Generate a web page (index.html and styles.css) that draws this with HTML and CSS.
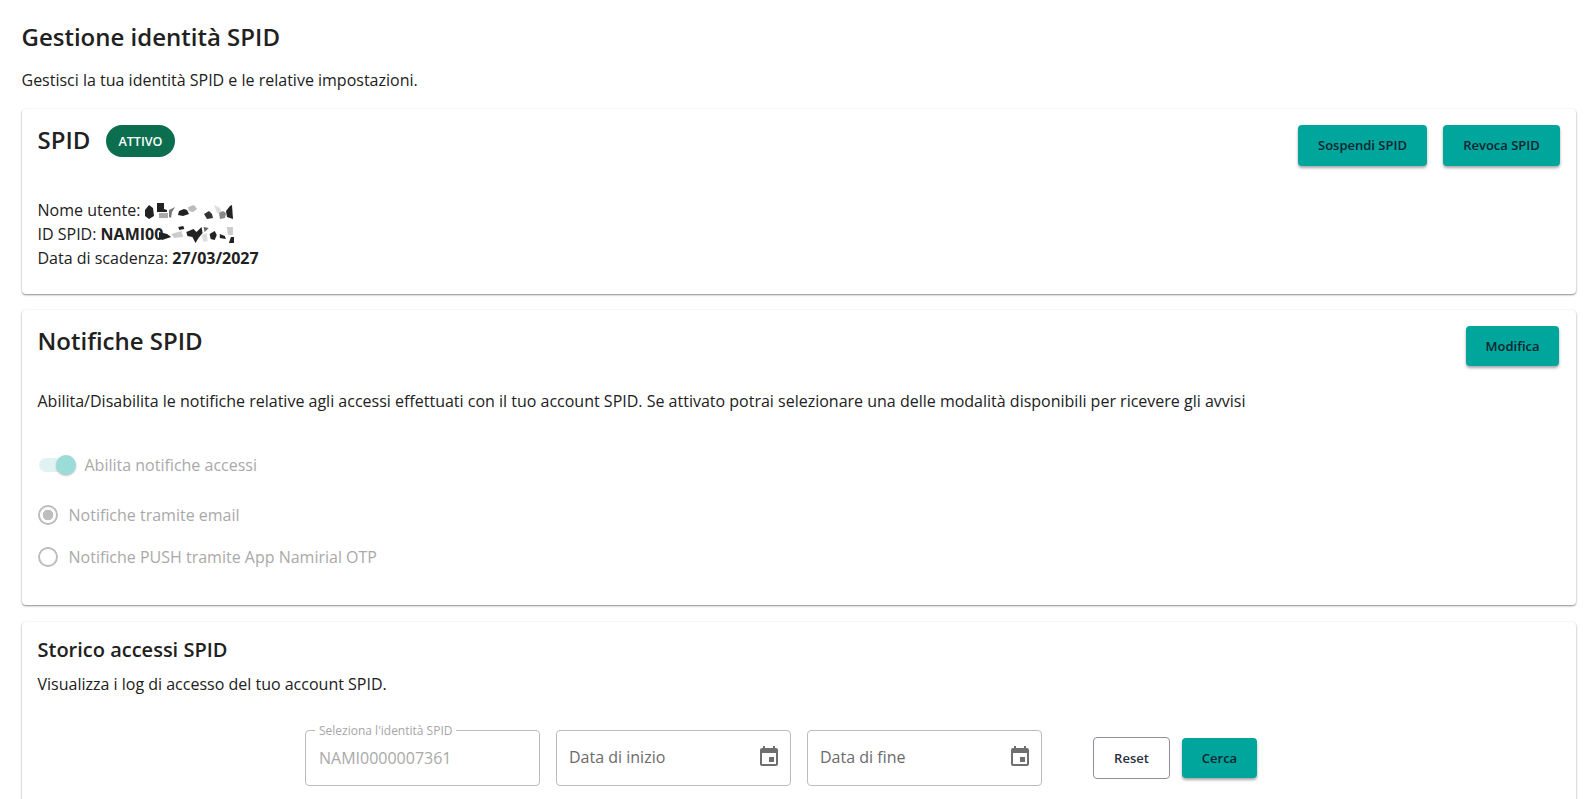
FILE: index.html
```html
<!DOCTYPE html>
<html lang="it">
<head>
<meta charset="utf-8">
<title>Gestione identità SPID</title>
<link rel="stylesheet" href="styles.css">
</head>
<body>
<main class="page">
  <h1 class="page-title">Gestione identità SPID</h1>
  <p class="page-sub">Gestisci la tua identità SPID e le relative impostazioni.</p>

  <section class="card card-spid">
    <div class="card-head">
      <div class="title-group">
        <h2 class="title-lg">SPID</h2>
        <span class="badge">ATTIVO</span>
      </div>
      <div class="actions">
        <button class="btn btn-sospendi">Sospendi SPID</button>
        <button class="btn btn-revoca">Revoca SPID</button>
      </div>
    </div>
    <div class="details">
      <div class="detail">Nome utente: <svg class="blur blur-name" viewBox="0 0 92 18" preserveAspectRatio="none" aria-hidden="true">
        <path fill="#222" d="M1 8l4-5 4 3 1 8-5 3-4-3z"/>
        <path fill="#222" d="M13 1h7v6l3 1v2h-10z"/>
        <path fill="#aaa" d="M15 11h9v5h-9z"/>
        <path fill="#777" d="M25 8l6-3-3 5-1 6-2-1z"/>
        <path fill="#222" d="M35 9l5-2 3 1 2 4-6 2-5-1z"/>
        <path fill="#bbb" d="M44 5l6-2 3 4-4 3-4-1z"/>
        <path fill="#333" d="M60 12l5-3 3 3 1 4-6 1z"/>
        <path fill="#ddd" d="M70 3l6 3 2 6-5-1z"/>
        <path fill="#888" d="M75 11l4-2 3 2-1 5-5 1z"/>
        <path fill="#222" d="M82 9l4-5 2-1 1 14-6-2z"/>
      </svg></div>
      <div class="detail">ID SPID: <b>NAMI00</b><svg class="blur blur-id" viewBox="0 0 76 18" preserveAspectRatio="none" aria-hidden="true">
        <path fill="#222" d="M0 6l8 2 4 3-9 3-3-2z"/>
        <path fill="#ccc" d="M12 8l10-3 2 6-9 1z"/>
        <path fill="#222" d="M19 1l5-1 1 3-5 1z"/>
        <path fill="#222" d="M27 6l7-3 3 3 5-5 1 6-4 5-3 5-3-6-5-1z"/>
        <path fill="#666" d="M44 1l5 1-4 4z"/>
        <path fill="#ddd" d="M42 9l5-2 1 8-4 1z"/>
        <path fill="#222" d="M50 8l5-3 2 4-2 5-4-1z"/>
        <path fill="#222" d="M60 8l5 2 1 3-6-1z"/>
        <path fill="#ccc" d="M67 1h6v8h-5z"/>
        <path fill="#222" d="M71 11h3v6h-5z"/>
      </svg></div>
      <div class="detail">Data di scadenza: <b>27/03/2027</b></div>
    </div>
  </section>

  <section class="card card-notif">
    <div class="card-head">
      <h2 class="title-lg">Notifiche SPID</h2>
      <button class="btn btn-modifica">Modifica</button>
    </div>
    <p class="notif-desc">Abilita/Disabilita le notifiche relative agli accessi effettuati con il tuo account SPID. Se attivato potrai selezionare una delle modalità disponibili per ricevere gli avvisi</p>
    <div class="switch-row">
      <span class="switch"><span class="switch-track"></span><span class="switch-thumb"></span></span>
      <span class="muted">Abilita notifiche accessi</span>
    </div>
    <div class="radio-row radio-first">
      <span class="radio radio-on"></span>
      <span class="muted">Notifiche tramite email</span>
    </div>
    <div class="radio-row radio-second">
      <span class="radio"></span>
      <span class="muted">Notifiche PUSH tramite App Namirial OTP</span>
    </div>
  </section>

  <section class="card card-log">
    <h3 class="title-md">Storico accessi SPID</h3>
    <p class="log-desc">Visualizza i log di accesso del tuo account SPID.</p>
    <div class="filters">
      <div class="field field-legend">
        <span class="legend">Seleziona l'identità SPID</span>
        <span class="value-off">NAMI0000007361</span>
      </div>
      <div class="field">
        <span class="placeholder">Data di inizio</span>
        <svg class="cal" viewBox="0 0 24 24" aria-hidden="true"><path d="M17 12h-5v5h5v-5zM16 1v2H8V1H6v2H5c-1.11 0-1.99.9-1.99 2L3 19c0 1.1.89 2 2 2h14c1.1 0 2-.9 2-2V5c0-1.1-.9-2-2-2h-1V1h-2zm3 18H5V8h14v11z"/></svg>
      </div>
      <div class="field">
        <span class="placeholder">Data di fine</span>
        <svg class="cal" viewBox="0 0 24 24" aria-hidden="true"><path d="M17 12h-5v5h5v-5zM16 1v2H8V1H6v2H5c-1.11 0-1.99.9-1.99 2L3 19c0 1.1.89 2 2 2h14c1.1 0 2-.9 2-2V5c0-1.1-.9-2-2-2h-1V1h-2zm3 18H5V8h14v11z"/></svg>
      </div>
      <button class="btn-outline">Reset</button>
      <button class="btn btn-cerca">Cerca</button>
    </div>
  </section>
</main>
</body>
</html>
```
FILE: styles.css
```css
* { box-sizing: border-box; }
html, body { margin: 0; height: 799px; overflow: hidden; background: #fff; }
body { font-family: "Open Sans", "Noto Sans", sans-serif; color: #212121; font-size: 16px; }
.page { height: 799px; overflow: hidden; padding: 21px 10px 0 22px; }
.page-title { margin: 0 0 0 -.5px; font-size: 24px; line-height: 32px; font-weight: 600; }
.page-sub { margin: 15px 0 0 -.5px; font-size: 16px; line-height: 24px; }

.card {
  background: #fff;
  border-radius: 4px;
  padding: 16px 16px 16px 15.5px;
  margin-top: 16px;
  box-shadow: 0 1px 2px rgba(0,0,0,.45), 0 0 3px rgba(0,0,0,.04);
}
.card-spid { height: 185px; margin-top: 17px; }
.card-notif { height: 295px; padding-top: 15px; }
.card-log { height: 240px; margin-top: 17px; padding-top: 14px; }

.card-head { display: flex; justify-content: space-between; align-items: flex-start; }
.title-group { display: flex; align-items: center; gap: 16px; }
.title-lg { margin: 0; font-size: 24px; line-height: 32px; font-weight: 600; }
.title-group .title-lg { margin-top: -2px; }
.title-md { margin: 0; font-size: 20px; line-height: 28px; font-weight: 600; }

.badge {
  background: #0b6e4f;
  color: #fff;
  height: 32px;
  padding: 0 12px;
  border-radius: 16px;
  display: inline-flex;
  align-items: center;
  font-size: 12.6px;
  font-weight: 600;
}
.actions { display: flex; gap: 16px; }
.btn {
  border: 0;
  background: #00a69c;
  color: #0f2430;
  font: 600 13px/1 "Open Sans", "Noto Sans", sans-serif;
  border-radius: 4px;
  height: 41px;
  box-shadow: 0 2px 3px rgba(0,0,0,.35);
  padding: 0;
}
.btn-sospendi { width: 129px; }
.btn-revoca { width: 117px; }
.btn-modifica { width: 93px; height: 40px; margin-top: 1px; margin-right: 1px; }

.details { margin-top: 32px; }
.detail { font-size: 16px; line-height: 24px; height: 24px; white-space: nowrap; }
.detail b { font-weight: 700; }
.blur { display: inline-block; vertical-align: -4px; height: 18px; }
.blur-name { width: 92px; }
.blur-id { width: 77px; margin-left: -4px; }

.notif-desc { margin: 23px 0 0; font-size: 16px; line-height: 24px; }
.muted { color: #a9a9a9; font-size: 16px; line-height: 24px; }
.switch-row { display: flex; align-items: center; gap: 8px; margin-top: 40px; height: 24px; }
.switch { position: relative; width: 39px; height: 24px; flex: none; }
.switch-track { position: absolute; left: 1px; top: 5px; width: 36px; height: 14px; border-radius: 7px; background: #e0f3f2; }
.switch-thumb { position: absolute; left: 18px; top: 2px; width: 20px; height: 20px; border-radius: 50%; background: #9cdcd8; box-shadow: 0 1px 2px rgba(0,0,0,.25); }
.radio-row { display: flex; align-items: center; gap: 11px; height: 24px; }
.radio-first { margin-top: 26px; }
.radio-second { margin-top: 18px; }
.radio { width: 20px; height: 20px; border-radius: 50%; border: 2px solid #bdbdbd; flex: none; background: #fff; }
.radio-on { background: radial-gradient(circle, #bdbdbd 0 5px, #fff 5.6px); }

.log-desc { margin: 8px 0 0; font-size: 16px; line-height: 24px; }
.filters { display: flex; align-items: flex-start; gap: 16px; margin-top: 34px; padding-left: 267.5px; }
.field {
  position: relative;
  flex: none;
  width: 235px;
  height: 56px;
  border: 1px solid #bdbdbd;
  border-radius: 4px;
  padding: 0 12px;
  display: flex;
  align-items: center;
  justify-content: space-between;
}
.field-legend { padding-left: 13px; }
.legend {
  position: absolute;
  left: 9px;
  top: -8px;
  padding: 0 4px;
  background: #fff;
  font-size: 12px;
  line-height: 16px;
  color: #a6a6a6;
  white-space: nowrap;
}
.value-off { color: #a9a9a9; font-size: 16px; }
.placeholder { color: #6b6b6b; font-size: 16px; margin-top: -3px; }
.cal { width: 24px; height: 24px; fill: #6f6f6f; margin-top: -3px; margin-right: -3px; }
.btn-outline {
  width: 77px;
  height: 42px;
  margin: 7px 0 0 35px;
  border: 1px solid #8f8f9c;
  border-radius: 4px;
  background: #fff;
  color: #2b2d42;
  font: 600 13px/1 "Open Sans", "Noto Sans", sans-serif;
  padding: 0;
}
.btn-cerca { width: 75px; height: 40px; margin-top: 8px; margin-left: -4px; }
```
